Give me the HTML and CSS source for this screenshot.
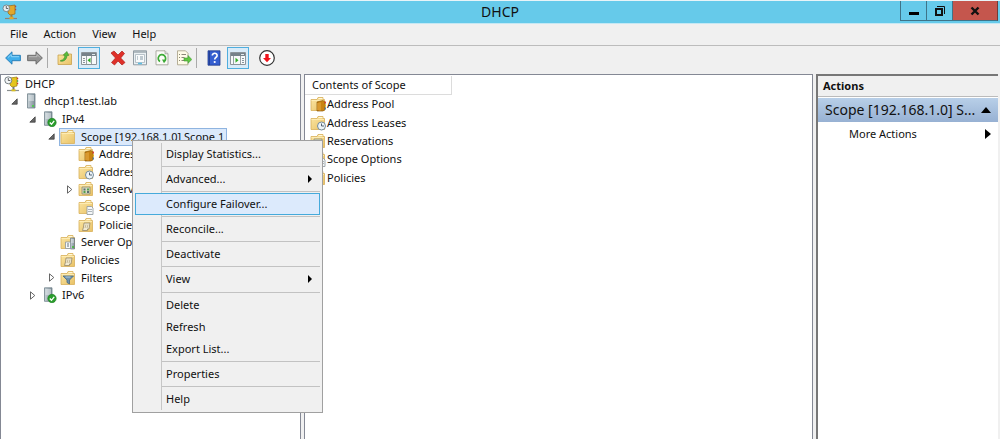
FILE: index.html
```html
<!DOCTYPE html>
<html lang="en">
<head>
<meta charset="utf-8">
<title>DHCP</title>
<link rel="stylesheet" href="styles.css">
</head>
<body>
<svg class="sprite" aria-hidden="true">
  <defs>
    <linearGradient id="gold" x1="0" y1="0" x2="1" y2="1"><stop offset="0" stop-color="#fbe6a4"/><stop offset="1" stop-color="#e9c266"/></linearGradient>
    <linearGradient id="steel" x1="0" y1="0" x2="1" y2="0"><stop offset="0" stop-color="#c9d3d8"/><stop offset="1" stop-color="#7e8e97"/></linearGradient>
    <symbol id="folder" viewBox="0 0 16 16"><path d="M1 3.500h6l1-2h5v2h1.500v11H1z" fill="url(#gold)" stroke="#d8b05a" stroke-width=".8"/><path d="M8.500 2.500h4" stroke="#fff8dc"/><path d="M1.500 4.500h12.500" stroke="#fff0bd" stroke-width=".8"/></symbol>
    <symbol id="pool" viewBox="0 0 16 16"><use href="#folder"/><path d="M7 6l6-1.500 2 1.500v7.500l-2 1.500H7z" fill="#c98314" stroke="#8e5c0b" stroke-width=".7"/><path d="M8 7v7M10 6.500v8" stroke="#e9b04c"/><path d="M15.300 5.500v2" stroke="#d33" stroke-width="1.200"/><path d="M15.300 8.500v2" stroke="#dfb519" stroke-width="1.200"/><path d="M15.300 11.500v2" stroke="#47a" stroke-width="1.200"/></symbol>
    <symbol id="lease" viewBox="0 0 16 16"><use href="#folder"/><circle cx="11.500" cy="11" r="4" fill="#edf4f8" stroke="#758b9b"/><path d="M11.500 8.500V11H14" fill="none" stroke="#456" stroke-width=".9"/></symbol>
    <symbol id="reserve" viewBox="0 0 16 16"><use href="#folder"/><path d="M4 6h8v7H4z" fill="#d9dcc0" stroke="#918c70" stroke-width=".8"/><path d="M5.500 7.500h2v2h-2zM9 10h2v2H9z" fill="#5b6d71"/><path d="M9 7.500h2v2H9zM5.500 10h2v2h-2z" fill="#52a04e"/></symbol>
    <symbol id="options" viewBox="0 0 16 16"><use href="#folder"/><path d="M9 7.500h4.500l1.500 1.500v6.500H9z" fill="#f5f7f8" stroke="#8d979d" stroke-width=".8"/><path d="M10.500 10.500h1m1 0h1m-3 2h1m1 0h1" stroke="#64727c"/></symbol>
    <symbol id="policy" viewBox="0 0 16 16"><use href="#folder"/><path d="M6 6h6l-1 6H9.500v1.500h-5L5.500 10z" fill="#f1ead1" stroke="#96886a" stroke-width=".8"/><path d="M8 7.500L7 11m3-3.500L9 11" stroke="#b9aa85" stroke-width=".8"/></symbol>
    <symbol id="server-options" viewBox="0 0 16 16"><use href="#folder"/><path d="M10.500 4h4v11h-4z" fill="url(#steel)" stroke="#6c7a82" stroke-width=".7"/><path d="M11 6h3m-3 2h3" stroke="#f2f6f8" stroke-width=".8"/><path d="M5.500 8h5v6.500h-5z" fill="#f7f9fa" stroke="#8995a0" stroke-width=".8"/><path d="M7 10h2m-2 2h2" stroke="#64727c"/><path d="M12 13h2" stroke="#3fba30" stroke-width="1.500"/></symbol>
    <symbol id="filter" viewBox="0 0 16 16"><use href="#folder"/><path d="M3 6h10.500L9.500 10v4L7 12.500V10z" fill="#6f91ac" stroke="#476983" stroke-width=".8"/><path d="M5.500 7h5" stroke="#c7deec" stroke-width=".8"/></symbol>
    <symbol id="server" viewBox="0 0 16 16"><path d="M4.500.8h7.500v14.200H4.500z" fill="url(#steel)" stroke="#70818a" stroke-width=".8"/><path d="M5.500 3h5.500m-5.500 2h5.500m-5.500 2h5.500" stroke="#f0f5f7" stroke-width=".9"/><path d="M9 13h2" stroke="#42d43b" stroke-width="1.600"/></symbol>
    <symbol id="server-ok" viewBox="0 0 16 16"><path d="M3.500.8h7.500v13.500H3.500z" fill="url(#steel)" stroke="#70818a" stroke-width=".8"/><path d="M4.500 3h5.500m-5.500 2h5.500m-5.500 2h5.500" stroke="#f0f5f7" stroke-width=".9"/><circle cx="11" cy="11.500" r="4.200" fill="#2b9d2d" stroke="#177d1c" stroke-width=".6"/><path d="M8.800 11.500l1.700 1.800 2.700-3.500" fill="none" stroke="#fff" stroke-width="1.300"/></symbol>
    <symbol id="dhcp" viewBox="0 0 16 16"><path d="M6 2l7-1v9l-5 1-2-2z" fill="#e5c51c" stroke="#9b7f10" stroke-width=".7"/><path d="M13 2.500h1.200m-1.200 5h1.200" stroke="#c33" stroke-width="1.500"/><path d="M13 5h1.200" stroke="#3b9c48" stroke-width="1.500"/><path d="M9.500 11v3" stroke="#777" stroke-width="2"/><path d="M3 14.500h12" stroke="#8a8f8f" stroke-width="1.200"/><path d="M7.500 14.300h4" stroke="#d9bf20" stroke-width="2"/><circle cx="4.300" cy="4.300" r="3.500" fill="#f2f5f6" stroke="#6c757b" stroke-width=".9"/><path d="M4.300 2v2.500h2" fill="none" stroke="#444" stroke-width=".8"/></symbol>
    <symbol id="dhcp-app" viewBox="0 0 16 16"><path d="M6 2l7-1v9l-5 1-2-2z" fill="#e2a82b" stroke="#986715" stroke-width=".7"/><path d="M13 2.500h1.200m-1.200 3h1.200" stroke="#a44" stroke-width="1.500"/><path d="M9.500 11v3" stroke="#a27b35" stroke-width="2"/><path d="M3 14.500h12" stroke="#8d8378" stroke-width="1.200"/><path d="M7.500 14h4" stroke="#e2a82b" stroke-width="2.500"/><circle cx="4.300" cy="4.300" r="3.300" fill="#e6edf0" stroke="#6c757b" stroke-width=".8"/><path d="M4.300 2v2.500h2" fill="none" stroke="#444" stroke-width=".8"/></symbol>
    <symbol id="expanded" viewBox="0 0 7 7"><path d="M6.200.8v5.400H.8z" fill="#666" stroke="#333" stroke-width=".7"/></symbol>
    <symbol id="collapsed" viewBox="0 0 7 9"><path d="M1.500 .8v7.400L5.800 4.500z" fill="#fff" stroke="#555" stroke-width=".9"/></symbol>
  </defs>
</svg>

<div class="window">
  <header class="titlebar">
    <svg class="icon"><use href="#dhcp-app"/></svg>
    <h1 class="title">DHCP</h1>
    <div class="controls">
      <button class="control" aria-label="Minimize"><svg width="12" height="12"><path d="M1 7h10v3H1z"/></svg></button>
      <button class="control" aria-label="Restore"><svg width="12" height="12"><path d="M2 4h6v6H2z" fill="none" stroke="#111" stroke-width="2"/><path d="M3 1.500h7.500V9" fill="none" stroke="#111"/></svg></button>
      <button class="control close" aria-label="Close"><svg width="12" height="12"><path d="M2.500 2.500l7 7m0-7l-7 7" stroke="#111" stroke-width="2.400"/></svg></button>
    </div>
  </header>

  <nav class="menubar">
    <button>File</button><button>Action</button><button>View</button><button>Help</button>
  </nav>

  <div class="toolbar">
    <button class="tool" aria-label="Back"><svg class="icon"><path d="M.6 8L7 1.800v3.500h8.400v5.400H7v3.500z" fill="#40aeea" stroke="#2379b4" stroke-width=".9"/><path d="M3 7.500L6.300 4.400V6.700H14" fill="none" stroke="#96d9fa" stroke-width=".9"/></svg></button>
    <button class="tool" aria-label="Forward"><svg class="icon"><path d="M15.400 8L9 1.800v3.500H.6v5.400H9v3.500z" fill="#929292" stroke="#656565" stroke-width=".9"/><path d="M2 6.700h8V4.400L13 7.500" fill="none" stroke="#c0c0c0" stroke-width=".9"/></svg></button>
    <span class="divider"></span>
    <button class="tool" aria-label="Up one level"><svg class="icon"><path d="M1 5h5l1-1h7.500v10.500H1z" fill="url(#gold)" stroke="#c9a14b" stroke-width=".8"/><path d="M3.500 10.500c3-.5 4-2 4.500-5L6.300 5.300 9.800 1.500l2 4-1.700-.1c-.5 4-2.500 6-6.600 5.800z" fill="#59bd3a" stroke="#38882a" stroke-width=".6"/></svg></button>
    <button class="tool pressed" aria-label="Console tree"><svg class="icon"><path d="M.5 2.500h15v12H.5z" fill="#f7f9fa" stroke="#8c959b"/><path d="M1 3h14v3H1z" fill="#76828a"/><path d="M11 4.500h3" stroke="#e3eaee"/><path d="M5.500 6v8m5-8v8" stroke="#98a1a6"/><path d="M2 8.500h2m-2 2h2m-2 2h2" stroke="#8a959d"/><path d="M9.500 7.800v5L6.500 10.300z" fill="#32ae29"/></svg></button>
    <button class="tool" aria-label="Delete"><svg class="icon"><path d="M1 3l3-2 4 4 4-4 2.500 2.500L10.700 8l4.300 4.500L12 15l-4-4-3.500 4L1.500 12.500l4-4.500z" fill="#df3029" stroke="#ad1f1b" stroke-width=".7"/></svg></button>
    <button class="tool" aria-label="Properties"><svg class="icon"><path d="M1.500.8h13v14h-13z" fill="#eaf0f3" stroke="#919ca4"/><path d="M2 2h12" stroke="#9ca8af" stroke-width="1.500"/><path d="M3.500 4.500h9v8h-9z" fill="#f9fbfc" stroke="#a8b5bd" stroke-width=".8"/><path d="M5 7h1m2 0h3m-6 2h1m2 0h3" stroke="#8297a5"/><path d="M6 13.500h4" stroke="#5dbfe5" stroke-width="1.500"/></svg></button>
    <button class="tool" aria-label="Refresh"><svg class="icon"><path d="M2 .8h9l3 3v11H2z" fill="#fbfbf7" stroke="#9b9b91" stroke-width=".8"/><path d="M11 .8v3h3" fill="#ddd" stroke="#9b9b91" stroke-width=".7"/><path d="M6 11.500A3.700 3.700 0 1 1 10.500 11" fill="none" stroke="#3caa36" stroke-width="1.700"/><path d="M8 9.500l4.500.3-2.500 3.500z" fill="#3caa36"/></svg></button>
    <button class="tool" aria-label="Export list"><svg class="icon"><path d="M1.500.8h8l2.500 2.500v11.500H1.500z" fill="#fffbe8" stroke="#a59d83" stroke-width=".8"/><path d="M3 4.500h1m1.500 0h4.500M3 7.500h1m1.500 0h3M3 10.500h1m1.500 0h3" stroke="#8b8878"/><path d="M8 8h4V5.500L15.800 9.500 12 13.300V11H8z" fill="#62c843" stroke="#3d9b31" stroke-width=".6"/></svg></button>
    <span class="divider"></span>
    <button class="tool" aria-label="Help"><svg class="icon"><path d="M2 .8h12v14.400H2z" fill="#355ed0" stroke="#203a8b" stroke-width=".8"/><path d="M3.300 1v14" stroke="#203a8b"/><path d="M6.300 5.600c0-3.200 5-3 4.800 0-.1 1.800-2.400 1.900-2.400 4" fill="none" stroke="#fff" stroke-width="1.600"/><circle cx="8.700" cy="12" r="1.100" fill="#fff"/></svg></button>
    <button class="tool pressed" aria-label="Action pane"><svg class="icon"><path d="M.5 2.500h15v12H.5z" fill="#f7f9fa" stroke="#8c959b"/><path d="M1 3h14v3H1z" fill="#76828a"/><path d="M11 4.500h3" stroke="#e3eaee"/><path d="M10.500 6v8m-7-8v8" stroke="#98a1a6"/><path d="M12 8.500h2m-2 2h2m-2 2h2" stroke="#8a959d"/><path d="M5.500 7.800v5l3-2.500z" fill="#32ae29"/></svg></button>
    <button class="tool" aria-label="Deactivate"><svg class="icon"><circle cx="8" cy="8" r="7.300" fill="#fff" stroke="#333" stroke-width="1.200"/><path d="M6.300 4h3.400v4h2.300L8 12.300 4 8h2.300z" fill="#f0121a"/></svg></button>
  </div>

  <main class="panes">
    <section class="tree-pane">
      <ul class="tree">
        <li class="root"><svg class="icon"><use href="#dhcp"/></svg><span class="label">DHCP</span></li>
        <li class="level1"><svg class="arrow"><use href="#expanded"/></svg><svg class="icon"><use href="#server"/></svg><span class="label">dhcp1.test.lab</span></li>
        <li class="level2"><svg class="arrow"><use href="#expanded"/></svg><svg class="icon"><use href="#server-ok"/></svg><span class="label">IPv4</span></li>
        <li class="level3"><svg class="arrow"><use href="#expanded"/></svg><span class="selected"><svg class="icon"><use href="#folder"/></svg><span class="label">Scope [192.168.1.0] Scope 1</span></span></li>
        <li class="level4"><span class="arrow"></span><svg class="icon"><use href="#pool"/></svg><span class="label">Address Pool</span></li>
        <li class="level4"><span class="arrow"></span><svg class="icon"><use href="#lease"/></svg><span class="label">Address Leases</span></li>
        <li class="level4"><svg class="arrow"><use href="#collapsed"/></svg><svg class="icon"><use href="#reserve"/></svg><span class="label">Reservations</span></li>
        <li class="level4"><span class="arrow"></span><svg class="icon"><use href="#options"/></svg><span class="label">Scope Options</span></li>
        <li class="level4"><span class="arrow"></span><svg class="icon"><use href="#policy"/></svg><span class="label">Policies</span></li>
        <li class="level3"><span class="arrow"></span><svg class="icon"><use href="#server-options"/></svg><span class="label">Server Options</span></li>
        <li class="level3"><span class="arrow"></span><svg class="icon"><use href="#policy"/></svg><span class="label">Policies</span></li>
        <li class="level3"><svg class="arrow"><use href="#collapsed"/></svg><svg class="icon"><use href="#filter"/></svg><span class="label">Filters</span></li>
        <li class="level2"><svg class="arrow"><use href="#collapsed"/></svg><svg class="icon"><use href="#server-ok"/></svg><span class="label">IPv6</span></li>
      </ul>
    </section>

    <section class="content-pane">
      <h2 class="column-head">Contents of Scope</h2>
      <ul class="contents">
        <li><svg class="icon"><use href="#pool"/></svg>Address Pool</li>
        <li><svg class="icon"><use href="#lease"/></svg>Address Leases</li>
        <li><svg class="icon"><use href="#reserve"/></svg>Reservations</li>
        <li><svg class="icon"><use href="#options"/></svg>Scope Options</li>
        <li><svg class="icon"><use href="#policy"/></svg>Policies</li>
      </ul>
    </section>

    <aside class="actions-pane">
      <h2 class="actions-head">Actions</h2>
      <button class="action-group">Scope [192.168.1.0] S...<svg width="10" height="6"><path d="M0 6l5-6 5 6z"/></svg></button>
      <button class="action">More Actions<svg width="6" height="10"><path d="M0 0l6 5-6 5z"/></svg></button>
    </aside>
  </main>

  <div class="context-menu" role="menu">
    <button role="menuitem">Display Statistics...</button>
    <hr>
    <button role="menuitem">Advanced...<svg width="4" height="8"><path d="M0 0l4 4-4 4z"/></svg></button>
    <hr>
    <button role="menuitem" class="active">Configure Failover...</button>
    <hr>
    <button role="menuitem">Reconcile...</button>
    <hr>
    <button role="menuitem">Deactivate</button>
    <hr>
    <button role="menuitem">View<svg width="4" height="8"><path d="M0 0l4 4-4 4z"/></svg></button>
    <hr>
    <button role="menuitem">Delete</button>
    <button role="menuitem">Refresh</button>
    <button role="menuitem">Export List...</button>
    <hr>
    <button role="menuitem">Properties</button>
    <hr>
    <button role="menuitem">Help</button>
  </div>
</div>
</body>
</html>
```

FILE: styles.css
```css
* { box-sizing: border-box; }
body {
  margin: 0;
  background: #f0f0f0;
  color: #111;
  font: 11px/16px "Noto Sans", "Open Sans", sans-serif;
}
button {
  margin: 0;
  padding: 0;
  border: 0;
  background: none;
  color: inherit;
  font: inherit;
}
ul { margin: 0; padding: 0; list-style: none; }
h1, h2 { margin: 0; font: inherit; }
svg { display: block; flex: none; }
.sprite { position: absolute; width: 0; height: 0; }
.icon { width: 16px; height: 16px; flex: none; }

.window {
  position: relative;
  display: flex;
  flex-direction: column;
  min-height: 100vh;
}

.titlebar {
  display: grid;
  grid-template-columns: 1fr auto 1fr;
  height: 24px;
  padding: 0 2px;
  border-top: 1px solid #e8f4f8;
  border-bottom: 1px solid #c5e8f4;
  background: #66caea;
}
.titlebar > .icon { margin-top: 3px; }
.title { font-size: 14px; line-height: 22px; }
.controls { display: flex; justify-content: flex-end; align-items: flex-start; }
.control {
  display: grid;
  place-items: center;
  width: 26px;
  height: 20px;
  border: 1px solid #3e7489;
  border-top: 0;
  border-right: 0;
}
.close { width: 46px; border-right: 1px solid #703c38; background: #c5564d; }

.menubar {
  display: flex;
  gap: 16px;
  height: 22px;
  padding: 0 10px 2px;
  border-bottom: 1px solid #bcbcbc;
}

.toolbar {
  display: flex;
  align-items: center;
  height: 28px;
  padding: 0 2px 4px;
}
.tool { display: grid; place-items: center; width: 22px; height: 22px; }
.pressed {
  margin: 0 7px 0 2px;
  border: 1px solid #50aede;
  background: #d9ebf8;
}
.divider { width: 1px; height: 20px; margin: 0 6px 0 1px; background: #aaa; }

.panes {
  flex: 1;
  display: grid;
  grid-template-columns: 301px minmax(0, 1fr) 182px;
  column-gap: 3px;
  padding-right: 2px;
}
.tree-pane { border: solid #848894; border-width: 1px 1px 0; background: #fff; }
.tree { display: grid; grid-auto-rows: 1fr; height: 229px; }
.tree li { display: flex; align-items: center; white-space: nowrap; }
.root { padding-left: 3px; }
.level1 { padding-left: 10px; }
.level2 { padding-left: 28px; }
.level3 { padding-left: 47px; }
.level4 { padding-left: 65px; }
.arrow { width: 7px; height: 9px; margin-right: 5px; }
.label { margin-left: 5px; }
.selected {
  display: flex;
  padding-right: 2px;
  background: #dbe9fb;
  outline: 1px solid #8fb4e0;
}

.content-pane { border: solid #848894; border-width: 1px 1px 0; background: #fff; }
.column-head {
  width: 147px;
  height: 19px;
  margin-top: 1px;
  padding: 1px 7px;
  border: solid #dcdcdc;
  border-width: 0 1px 1px 0;
}
.contents { display: grid; grid-auto-rows: 1fr; height: 92px; padding-left: 5px; }
.contents li { display: flex; align-items: center; gap: 1px; }

.actions-pane { border: solid #777; border-width: 2px 0 0 2px; background: #fff; }
.actions-head {
  height: 21px;
  padding: 2px 5px;
  border-bottom: 1px solid #bbb;
  background: #f0f0f0;
  font-weight: bold;
}
.action-group {
  display: flex;
  align-items: center;
  justify-content: space-between;
  width: 100%;
  height: 24px;
  margin-top: 1px;
  padding: 0 7px;
  background: linear-gradient(#b8cfe8, #97b1d3);
  font-size: 14px;
  white-space: nowrap;
}
.action {
  display: flex;
  align-items: center;
  justify-content: space-between;
  width: 100%;
  height: 24px;
  padding: 0 7px 0 31px;
}

.context-menu {
  position: absolute;
  top: 140px;
  left: 132px;
  display: flex;
  flex-direction: column;
  justify-content: space-between;
  width: 191px;
  height: 273px;
  padding: 2px;
  border: 1px solid #a0a0a0;
  background: linear-gradient(#c6c6c6, #c6c6c6) 28px 2px / 1px 267px no-repeat #f0f0f0;
}
.context-menu button {
  display: flex;
  align-items: center;
  justify-content: space-between;
  height: 22px;
  padding: 0 8px 0 31px;
  text-align: left;
}
.context-menu .active {
  padding: 0 7px 0 30px;
  border: 1px solid #45aadb;
  background: #dceafc;
}
.context-menu hr {
  height: 1px;
  margin: 1px 0 1px 27px;
  border: 0;
  background: #c2c2c2;
}
```
